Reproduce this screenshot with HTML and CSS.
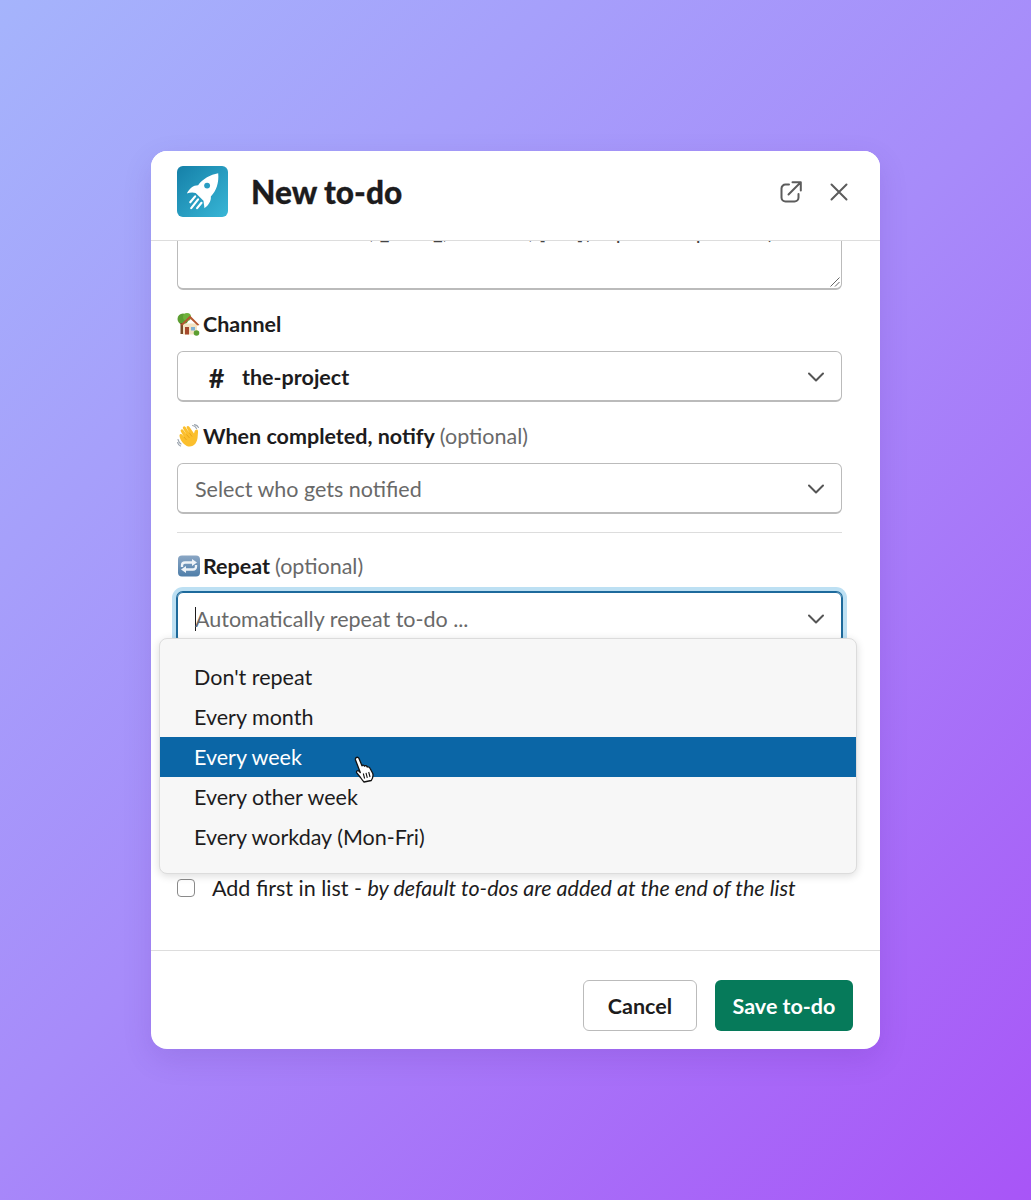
FILE: index.html
```html
<!DOCTYPE html>
<html lang="en">
<head>
<meta charset="utf-8">
<title>New to-do</title>
<link rel="stylesheet" href="styles.css">
</head>
<body>
<main class="modal">
  <header class="modal-header">
    <svg class="app-icon" viewBox="0 0 52 52" aria-hidden="true">
      <defs><linearGradient id="appGrad" x1="0" y1="0" x2="1" y2="1"><stop offset="0" stop-color="#1580a8"/><stop offset="1" stop-color="#38b6d6"/></linearGradient></defs>
      <rect width="52" height="52" rx="6" fill="url(#appGrad)"/>
      <path fill="#fff" d="M42 7.5C34 9 26.500 13 21.500 19.500C16.500 19.500 12.500 23 10 28C13 27 16 26.500 19 27.500L27 35.500C27.500 38 27.500 40.500 28 43C32 40 35 36 34.500 31C40 26 43 17 42 7.500Z"/>
      <circle cx="30.700" cy="20" r="3" fill="#2a9dc2"/>
      <path stroke="#fff" stroke-width="2.200" stroke-linecap="round" fill="none" d="M18.500 31 13.500 37M21.500 34 14.500 43M25 37.500 20.500 43"/>
    </svg>
    <h1 class="modal-title">New to-do</h1>
    <div class="header-actions">
      <svg class="icon-open" viewBox="0 0 22 22" aria-hidden="true"><path d="M9 3.500H5.500a4 4 0 0 0-4 4v9a4 4 0 0 0 4 4h9a4 4 0 0 0 4-4V13M8.500 13.500 20.500 1.500M12.500 1.200H20.800V9.500"/></svg>
      <svg class="icon-close" viewBox="0 0 18 18" aria-hidden="true"><path d="M1.500 1.500 16.500 16.500M16.500 1.500 1.500 16.500"/></svg>
    </div>
  </header>

  <section class="modal-body">
    <div class="textarea">
      <span class="textarea-text">Use *bold*, _italic_, ~strike~, [link](http://example.com)</span>
      <svg class="resize-grip" viewBox="0 0 10 10" aria-hidden="true"><path d="M9.500 .5 .5 9.500M9.500 5 5 9.500"/></svg>
    </div>

    <div class="label label-first">
      <svg class="emoji" viewBox="0 0 24 24" aria-hidden="true">
        <circle cx="6" cy="7" r="5.500" fill="#5c9e31"/><circle cx="10" cy="5" r="4" fill="#6fb23c"/><rect x="3.500" y="11" width="3" height="11" fill="#7a4a26"/>
        <rect x="6" y="11.500" width="14" height="11" fill="#f3e3c3"/>
        <path d="M3.500 13 13 3.500 22.500 13 20.500 13.500 13 6.500 5.500 13.500Z" fill="#b5562f"/>
        <rect x="8" y="15" width="4" height="7.500" fill="#a5492c"/><rect x="14" y="15" width="4" height="3.500" fill="#7fb2d6"/>
        <circle cx="19.500" cy="21" r="2.800" fill="#5c9e31"/>
      </svg>
      <span class="label-strong">Channel</span>
    </div>
    <div class="select">
      <span class="select-hash">#</span><span class="select-value">the-project</span>
      <svg class="chevron" viewBox="0 0 16 10" aria-hidden="true"><path d="M1 1.500 8 8.500 15 1.500"/></svg>
    </div>

    <div class="label">
      <svg class="emoji" viewBox="0 0 24 24" aria-hidden="true">
        <path fill="#fbbf2d" d="M7 20C3.500 16.500 2.500 13 2.500 11.500 2.500 10 4.500 9.500 5.500 11L7 13 3.800 7.500C3 5.800 5 4.500 6.300 6L9.500 10.500 6 4.500C5.200 2.800 7.300 1.500 8.500 3L12.300 8.800 9.800 4C9 2.300 11 1.300 12.300 2.700L17 9.500C17.500 7.500 18 5.800 19.500 5.500 21 5.300 21.200 7 21 8.500 20.500 12.500 21 16 18.500 19.500 15.500 23.500 10.500 23.500 7 20Z"/>
        <path fill="none" stroke="#e09a17" stroke-width=".7" d="M7 13 9.500 16M9.500 10.500 12.500 14M12.300 8.800 15 12.500"/>
        <path fill="none" stroke="#9aa3ad" stroke-width="1.100" stroke-linecap="round" d="M15.500 1.500C17.500 1.800 18.800 3 19.500 4.500M17.500.6C19.500 1 20.800 2 21.500 3.500M1 15.500C1.500 17.500 2.500 19 4 20M.5 18.500C1 20 2 21.300 3.500 22"/>
      </svg>
      <span class="label-strong">When completed, notify</span><span class="label-muted">(optional)</span>
    </div>
    <div class="select">
      <span class="select-placeholder">Select who gets notified</span>
      <svg class="chevron" viewBox="0 0 16 10" aria-hidden="true"><path d="M1 1.500 8 8.500 15 1.500"/></svg>
    </div>

    <hr class="divider">

    <div class="label label-repeat">
      <svg class="emoji" viewBox="0 0 24 24" aria-hidden="true">
        <defs><linearGradient id="repGrad" x1="0" y1="0" x2="0" y2="1"><stop offset="0" stop-color="#8aa6c4"/><stop offset="1" stop-color="#4f7ea9"/></linearGradient></defs>
        <rect x="1" y="1.500" width="22" height="21" rx="4" fill="url(#repGrad)"/>
        <path fill="none" stroke="#eef3f8" stroke-width="2.300" d="M5 13V11.500C5 9.500 6.500 8.500 8 8.500H16M19 11V12.500C19 14.500 17.500 15.500 16 15.500H8"/>
        <path fill="#eef3f8" d="M15 5 20 8.500 15 12ZM9 12 4 15.500 9 19Z"/>
      </svg>
      <span class="label-strong">Repeat</span><span class="label-muted">(optional)</span>
    </div>
    <div class="repeat-field">
      <div class="select select-focused">
        <span class="caret"></span><span class="select-placeholder">Automatically repeat to-do ...</span>
        <svg class="chevron" viewBox="0 0 16 10" aria-hidden="true"><path d="M1 1.500 8 8.500 15 1.500"/></svg>
      </div>
      <ul class="menu">
        <li class="menu-item">Don't repeat</li>
        <li class="menu-item">Every month</li>
        <li class="menu-item menu-item-active">Every week</li>
        <li class="menu-item">Every other week</li>
        <li class="menu-item">Every workday (Mon-Fri)</li>
      </ul>
      <svg class="hand-cursor" viewBox="0 0 20 27" aria-hidden="true">
        <path fill="#fff" stroke="#111" stroke-width="1.300" stroke-linejoin="round" d="M2 1.800C3.200 .8 4.500 1.300 5 2.500L8 9.800C8.300 8.800 10 8.800 10.500 10.200 11 9.300 12.700 9.500 13.200 11 14 10.500 15.500 11 16 12.300L18.800 17.500C19.500 20 18.500 22.500 17.300 24.500L10 26C8.500 24.500 7.500 23 6.500 21.500L2.800 16.800C2 15.500 3.300 14 4.800 15L6.300 16.500 1.500 4C1.300 3.200 1.500 2.300 2 1.800Z"/>
        <path fill="none" stroke="#111" stroke-width="1.100" d="M9.300 17.500 10.600 22.500M12 16.800 13.300 21.800M14.700 16 16 21"/>
      </svg>
    </div>

    <label class="check-row">
      <span class="checkbox"></span>
      <span class="check-text">Add first in list - <em>by default to-dos are added at the end of the list</em></span>
    </label>
  </section>

  <footer class="modal-footer">
    <button class="btn btn-cancel" type="button">Cancel</button>
    <button class="btn btn-save" type="button">Save to-do</button>
  </footer>
</main>
</body>
</html>
```
FILE: styles.css
```css
* { box-sizing: border-box; }
html, body { margin: 0; height: 100%; }
body {
  width: 1031px;
  height: 1200px;
  overflow: hidden;
  display: flex;
  align-items: center;
  justify-content: center;
  font-family: Lato, "Liberation Sans", sans-serif;
  font-size: 21.500px;
  color: #1d1c1d;
  background: linear-gradient(135deg, #a5b4fc 0%, #a78bfa 50%, #a855f7 100%);
}
.modal {
  width: 729px;
  height: 898px;
  background: #fff;
  border-radius: 16px;
  display: flex;
  flex-direction: column;
  overflow: hidden;
  box-shadow: 0 10px 30px rgba(60, 20, 120, .12);
}
.modal-header {
  height: 90px;
  flex: none;
  display: flex;
  align-items: center;
  padding: 0 32px 0 26px;
  border-bottom: 1px solid #dddddd;
  position: relative;
  z-index: 1;
  background: #fff;
}
.app-icon { width: 51px; height: 51px; margin-top: -8px; flex: none; }
.modal-title {
  margin: -8px 0 0 23px;
  font-size: 31.600px;
  line-height: 40px;
  font-weight: 900;
  -webkit-text-stroke: .3px #1d1c1d;
  color: #1d1c1d;
}
.header-actions { margin-left: auto; display: flex; align-items: center; gap: 28px; margin-top: -8px; }
.icon-open { width: 22px; height: 22px; fill: none; stroke: #5c5c5c; stroke-width: 2; stroke-linecap: round; stroke-linejoin: round; }
.icon-close { width: 18px; height: 18px; fill: none; stroke: #5c5c5c; stroke-width: 2; stroke-linecap: round; }
.modal-body {
  flex: 1;
  min-height: 0;
  display: flex;
  flex-direction: column;
  justify-content: flex-end;
  overflow: hidden;
  padding: 0 38px 48px 26px;
}
.modal-body > * { flex: none; }
.textarea {
  height: 70px;
  border: 1px solid #bbbbbb;
  border-bottom-width: 2px;
  border-radius: 6px;
  position: relative;
  padding: 0 0 0 92px;
  font-size: 21.200px;
  line-height: 20px;
  color: #444;
  white-space: nowrap;
}
.textarea-text { display: block; }
.resize-grip { position: absolute; right: 1px; bottom: 1px; width: 10px; height: 10px; fill: none; stroke: #666; stroke-width: 1; }
.label {
  display: flex;
  align-items: center;
  height: 28px;
  margin-top: 20px;
  white-space: pre;
}
.label-first { margin-top: 20px; }
.label-repeat { margin-top: 20px; }
.emoji { width: 24px; height: 24px; margin-right: 2px; flex: none; }
.label-strong { font-weight: 700; }
.label-muted { color: #696969; margin-left: 5px; }
.select {
  height: 51px;
  margin-top: 13px;
  border: 1px solid #bbbbbb;
  border-bottom-width: 2px;
  border-radius: 6px;
  display: flex;
  align-items: center;
  padding: 2px 17px 0 17px;
}
.select-hash { font-size: 27px; line-height: 1; font-weight: 700; width: 17px; margin: 0 17px 0 13px; text-align: center; }
.select-value { font-weight: 700; }
.select-placeholder { color: #696969; }
.chevron { width: 16px; height: 10px; margin-left: auto; fill: none; stroke: #555; stroke-width: 2; stroke-linecap: round; stroke-linejoin: round; }
.divider { border: 0; border-top: 1px solid #dddddd; width: 100%; margin: 18px 0 19px; height: 0; }
.divider + .label { margin-top: 0; }
.repeat-field { position: relative; height: 51px; margin-top: 12px; }
.select-focused {
  margin-top: 0;
  border: 1px solid #1d6a9c;
  box-shadow: 0 0 0 1px #1d6a9c, 0 0 0 5px #bde0f3;
}
.caret { width: 1px; height: 24px; background: #1d1c1d; margin-right: -1px; }
.menu {
  position: absolute;
  left: -18px;
  top: 46px;
  width: 698px;
  height: 236px;
  margin: 0;
  padding: 18px 0 17px;
  list-style: none;
  background: #f7f7f7;
  border: 1px solid #dcdcdc;
  border-radius: 8px;
  box-shadow: 0 2px 8px rgba(0, 0, 0, .14);
}
.menu-item {
  height: 40px;
  line-height: 41px;
  padding-left: 34px;
  color: #1d1c1d;
}
.menu-item-active { background: #0b66a6; color: #fff; }
.hand-cursor { position: absolute; left: 177px; top: 164px; width: 20px; height: 27px; }
.check-row {
  display: flex;
  align-items: center;
  margin-top: 231px;
  height: 28px;
  white-space: nowrap;
}
.checkbox {
  width: 18px;
  height: 18px;
  border: 1px solid #8a8a8a;
  border-radius: 4px;
  background: #fff;
  margin-right: 17px;
  flex: none;
}
.modal-footer {
  flex: none;
  height: 99px;
  border-top: 1px solid #dddddd;
  padding: 29px 27px 18px;
  display: flex;
  justify-content: flex-end;
  gap: 18px;
}
.btn {
  height: 51px;
  border-radius: 6px;
  font: 700 21.500px Lato, "Liberation Sans", sans-serif;
  padding: 0;
}
.btn-cancel { width: 114px; background: #fff; border: 1px solid #bbbbbb; color: #1d1c1d; }
.btn-save { width: 138px; background: #067a5a; border: 0; color: #fff; }
```
